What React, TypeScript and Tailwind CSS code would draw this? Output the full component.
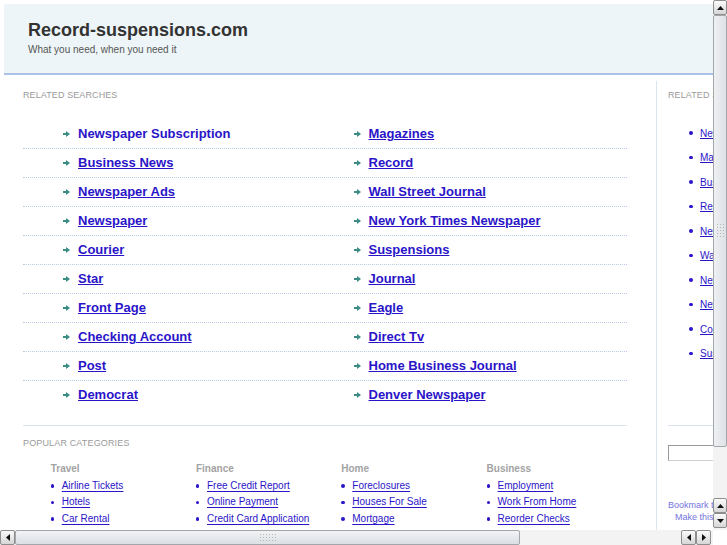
import React from 'react';

const rows: [string, string][] = [
  ['Newspaper Subscription', 'Magazines'],
  ['Business News', 'Record'],
  ['Newspaper Ads', 'Wall Street Journal'],
  ['Newspaper', 'New York Times Newspaper'],
  ['Courier', 'Suspensions'],
  ['Star', 'Journal'],
  ['Front Page', 'Eagle'],
  ['Checking Account', 'Direct Tv'],
  ['Post', 'Home Business Journal'],
  ['Democrat', 'Denver Newspaper'],
];

const cats: { title: string; items: string[] }[] = [
  { title: 'Travel', items: ['Airline Tickets', 'Hotels', 'Car Rental'] },
  { title: 'Finance', items: ['Free Credit Report', 'Online Payment', 'Credit Card Application'] },
  { title: 'Home', items: ['Foreclosures', 'Houses For Sale', 'Mortgage'] },
  { title: 'Business', items: ['Employment', 'Work From Home', 'Reorder Checks'] },
];

const side = [
  'Newspaper Subscription',
  'Magazines',
  'Business News',
  'Record',
  'Newspaper Ads',
  'Wall Street Journal',
  'Newspaper',
  'New York Times Newspaper',
  'Courier',
  'Suspensions',
];

function Arrow() {
  return (
    <svg width="7" height="6" viewBox="0 0 7 6" className="shrink-0">
      <rect x="0" y="2" width="4" height="2" fill="#3a8c84" />
      <polygon points="3,0 7,3 3,6" fill="#3a8c84" />
    </svg>
  );
}

function Tri({ dir }: { dir: 'up' | 'down' | 'left' | 'right' }) {
  if (dir === 'up')
    return (
      <svg width="7" height="4" viewBox="0 0 7 4">
        <polygon points="0,4 3.5,0 7,4" fill="#111" />
      </svg>
    );
  if (dir === 'down')
    return (
      <svg width="7" height="4" viewBox="0 0 7 4">
        <polygon points="0,0 3.5,4 7,0" fill="#111" />
      </svg>
    );
  if (dir === 'left')
    return (
      <svg width="4" height="7" viewBox="0 0 4 7">
        <polygon points="4,0 0,3.5 4,7" fill="#111" />
      </svg>
    );
  return (
    <svg width="4" height="7" viewBox="0 0 4 7">
      <polygon points="0,0 4,3.5 0,7" fill="#111" />
    </svg>
  );
}

function VBtn({ dir }: { dir: 'up' | 'down' }) {
  return (
    <div className="h-[15px] w-[14px] shrink-0 border border-[#8e8e8e] rounded-[2px] bg-linear-to-b from-[#fbfbfb] to-[#d6d6d6] flex items-center justify-center">
      <Tri dir={dir} />
    </div>
  );
}

function HBtn({ dir }: { dir: 'left' | 'right' }) {
  return (
    <div className="w-[15px] h-[15px] shrink-0 border border-[#8e8e8e] rounded-[2px] bg-linear-to-b from-[#fbfbfb] to-[#d6d6d6] flex items-center justify-center">
      <Tri dir={dir} />
    </div>
  );
}

function Grip({ w, h }: { w: number; h: number }) {
  const dots: React.ReactElement[] = [];
  for (let x = 1; x < w; x += 3) {
    for (let y = 1; y < h; y += 3) {
      dots.push(<rect key={`${x}-${y}`} x={x} y={y} width="1" height="1" fill="#b4b4b4" />);
    }
  }
  return (
    <svg width={w} height={h} viewBox={`0 0 ${w} ${h}`}>
      {dots}
    </svg>
  );
}

export default function App() {
  return (
    <div className="relative w-[727px] h-[545px] overflow-hidden bg-white font-['Liberation_Sans',Arial,sans-serif]">
      <div className="w-[960px] pt-[4px] pl-[4px]">
        {/* header */}
        <div className="bg-[#eef5f8] border-b-2 border-[#aac2e8] pl-[24px] pt-[17px] pb-[17px]">
          <div className="text-[18px] leading-[18px] font-bold text-[#333333]">Record-suspensions.com</div>
          <div className="mt-[4.5px] text-[10px] leading-[12px] text-[#555555]">What you need, when you need it</div>
        </div>

        <div className="flex mt-[6px] min-h-[480px]">
          {/* main column */}
          <div className="w-[652px] shrink-0 pl-[19px] pr-[29px] pt-[9.6px]">
            <div className="text-[9px] leading-[11px] tracking-[0.1px] text-[#9a9a9a] uppercase">Related Searches</div>
            <div className="mt-[19px]">
              {rows.map(([a, b], i) => (
                <div
                  key={i}
                  className={
                    i < rows.length - 1
                      ? 'flex h-[29px] items-center border-b border-dotted border-[#b9c9e6]'
                      : 'flex h-[29px] items-center border-b border-transparent'
                  }
                >
                  <div className="w-[290.5px] shrink-0 pl-[40px] flex items-center">
                    <Arrow />
                    <a className={i === 0 ? 'ml-[8px] text-[13px] leading-[16px] font-bold text-[#2a14c8]' : 'ml-[8px] text-[13px] leading-[16px] font-bold text-[#2a14c8] underline'}>
                      {a}
                    </a>
                  </div>
                  <div className="pl-[40px] flex items-center">
                    <Arrow />
                    <a className="ml-[8px] text-[13px] leading-[16px] font-bold text-[#2a14c8] underline">{b}</a>
                  </div>
                </div>
              ))}
            </div>
            <div className="mt-[15.4px] h-px bg-[#dbe3f1]" />
            <div className="mt-[11.5px] text-[9px] leading-[11px] tracking-[0.15px] text-[#9a9a9a] uppercase">Popular Categories</div>
            <div className="mt-[14px] pl-[27.7px] grid grid-cols-[repeat(4,145.3px)]">
              {cats.map((c) => (
                <div key={c.title}>
                  <div className="text-[10px] leading-[12px] font-bold text-[#a3a3a3]">{c.title}</div>
                  <div className="mt-[2.75px]">
                    {c.items.map((it) => (
                      <div key={it} className="flex items-center leading-[16.6px] text-[10px]">
                        <span className="w-[3.5px] h-[3.5px] rounded-full bg-[#2a14c8] shrink-0" />
                        <a className="ml-[7.5px] text-[#2a14c8] underline underline-offset-2 whitespace-nowrap">{it}</a>
                      </div>
                    ))}
                  </div>
                </div>
              ))}
            </div>
          </div>

          {/* sidebar */}
          <div className="w-[220px] shrink-0 border-l border-[#dde5f3] pl-[11px] pt-[9.6px]">
            <div className="text-[9px] leading-[11px] tracking-[0.1px] text-[#9a9a9a] uppercase">Related Searches</div>
            <div className="mt-[19.85px] pl-[21px]">
              {side.map((s) => (
                <div key={s} className="flex items-center h-[24.5px] text-[10px]">
                  <span className="w-[3.5px] h-[3.5px] rounded-full bg-[#2a14c8] shrink-0" />
                  <a className="ml-[7.5px] text-[#2a14c8] underline whitespace-nowrap">{s}</a>
                </div>
              ))}
            </div>
            <div className="mt-[59.5px] h-px bg-[#dbe3f1]" />
            <div className="mt-[19px] h-[16px] w-[150px] border border-[#9a9a9a] border-b-[#d0d0d0] border-r-[#d0d0d0] bg-white" />
            <div className="mt-[38px] text-[9px] leading-[12px] text-[#7474de] whitespace-nowrap">Bookmark this page</div>
            <div className="pl-[7px] text-[9px] leading-[12px] text-[#7474de] whitespace-nowrap">Make this your homepage</div>
          </div>
        </div>
      </div>

      {/* vertical scrollbar */}
      <div className="absolute left-[713px] top-0 w-[14px] h-[530px] flex flex-col bg-[#f3f3f3]">
        <VBtn dir="up" />
        <div className="h-[432px] shrink-0 border border-[#a3a6aa] rounded-[2px] bg-linear-to-r from-[#eef0f2] to-[#dfe2e6] flex items-center justify-center">
          <Grip w={9} h={16} />
        </div>
        <div className="flex-1 bg-[radial-gradient(#d6d6d6_0.6px,transparent_0.7px)] bg-[length:2px_2px]" />
        <VBtn dir="up" />
        <VBtn dir="down" />
        <div className="h-[2px]" />
      </div>

      {/* horizontal scrollbar */}
      <div className="absolute left-0 top-[530px] w-[713px] h-[15px] flex bg-[#f3f3f3]">
        <HBtn dir="left" />
        <div className="w-[505px] shrink-0 border border-[#a3a6aa] rounded-[2px] bg-linear-to-b from-[#f2f3f5] to-[#dcdfe3] flex items-center justify-center">
          <Grip w={17} h={9} />
        </div>
        <div className="flex-1 bg-[radial-gradient(#d6d6d6_0.6px,transparent_0.7px)] bg-[length:2px_2px]" />
        <HBtn dir="left" />
        <HBtn dir="right" />
        <div className="w-[2px]" />
      </div>
      <div className="absolute left-[713px] top-[530px] w-[14px] h-[15px] bg-white" />
    </div>
  );
}
